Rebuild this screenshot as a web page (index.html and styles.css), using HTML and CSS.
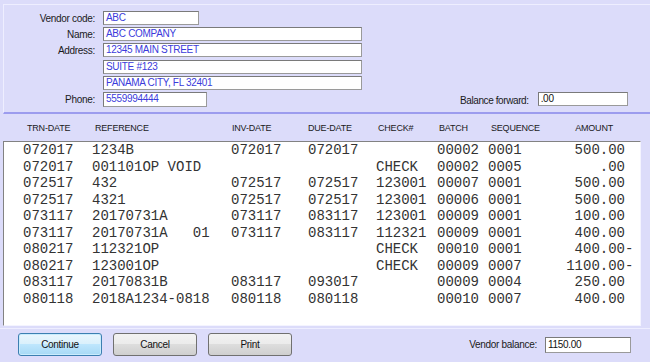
FILE: index.html
```html
<!DOCTYPE html>
<html lang="en">
<head>
  <meta charset="UTF-8">
  <title>Vendor History</title>
  <link rel="stylesheet" href="styles.css">
</head>
<body>
  <!-- Vendor info panel -->
  <div class="top-panel">
    <div class="form-row">
      <label>Vendor code:</label>
      <div class="field w-code">ABC</div>
    </div>
    <div class="form-row">
      <label>Name:</label>
      <div class="field w-long">ABC COMPANY</div>
    </div>
    <div class="form-row">
      <label>Address:</label>
      <div class="field w-long">12345 MAIN STREET</div>
    </div>
    <div class="form-row">
      <label></label>
      <div class="field w-long">SUITE #123</div>
    </div>
    <div class="form-row">
      <label></label>
      <div class="field w-long">PANAMA CITY, FL 32401</div>
    </div>
    <div class="form-row phone-row">
      <label>Phone:</label>
      <div class="field w-phone">5559994444</div>
      <span class="balance-label">Balance forward:</span>
      <div class="field w-balance">.00</div>
    </div>
  </div>

  <!-- Transactions -->
  <div class="grid header">
    <span class="h-trn">TRN-DATE</span>
    <span class="h-ref">REFERENCE</span>
    <span class="h-inv">INV-DATE</span>
    <span class="h-due">DUE-DATE</span>
    <span class="h-check">CHECK#</span>
    <span class="h-batch">BATCH</span>
    <span class="h-seq">SEQUENCE</span>
    <span class="h-amt">AMOUNT</span>
  </div>

  <div class="listbox" id="list"></div>

  <!-- Footer -->
  <div class="footer">
    <button class="btn default">Continue</button>
    <button class="btn">Cancel</button>
    <button class="btn">Print</button>
    <span class="vb-label">Vendor balance:</span>
    <div class="field w-vbal">1150.00</div>
  </div>

  <script>
    var rows = [
      ["072017", "1234B", "072017", "072017", "", "00002", "0001", "500.00", ""],
      ["072017", "001101OP VOID", "", "", "CHECK", "00002", "0005", ".00", ""],
      ["072517", "432", "072517", "072517", "123001", "00007", "0001", "500.00", ""],
      ["072517", "4321", "072517", "072517", "123001", "00006", "0001", "500.00", ""],
      ["073117", "20170731A", "073117", "083117", "123001", "00009", "0001", "100.00", ""],
      ["073117", "20170731A   01", "073117", "083117", "112321", "00009", "0001", "400.00", ""],
      ["080217", "112321OP", "", "", "CHECK", "00010", "0001", "400.00", "-"],
      ["080217", "123001OP", "", "", "CHECK", "00009", "0007", "1100.00", "-"],
      ["083117", "20170831B", "083117", "093017", "", "00009", "0004", "250.00", ""],
      ["080118", "2018A1234-0818", "080118", "080118", "", "00010", "0007", "400.00", ""]
    ];
    var list = document.getElementById("list");
    rows.forEach(function(r) {
      var row = document.createElement("div");
      row.className = "grid row";
      r.forEach(function(v, i) {
        var c = document.createElement("span");
        c.textContent = v;
        if (i === 7) c.className = "amt";
        row.appendChild(c);
      });
      list.appendChild(row);
    });
  </script>
</body>
</html>
```

FILE: styles.css
```css
body {
  margin: 0;
  width: 650px;
  height: 362px;
  overflow: hidden;
  background: #dcdcfa;
  font-family: "Liberation Sans", Arial, sans-serif;
  font-size: 10px;
  color: #1a1a1a;
}

/* Vendor info panel */
.top-panel {
  margin: 4px 0 0 3px;
  padding-top: 6px;
  border-top: 1px solid #eeeeff;
  border-left: 1px solid #eeeeff;
  border-bottom: 2px solid #9c9cee;
  display: flex;
  flex-direction: column;
  gap: 2.2px;
  box-sizing: border-box;
  height: 110px;
}
.form-row {
  display: flex;
  align-items: center;
  height: 14px;
}
.form-row label {
  width: 91px;
  text-align: right;
  margin-right: 8px;
  letter-spacing: -0.3px;
}
.phone-row {
  height: 15px;
}
.balance-label {
  margin-left: 253px;
  margin-top: 3px;
  letter-spacing: -0.4px;
}
.field {
  box-sizing: border-box;
  height: 14px;
  background: #fff;
  border: 1px solid #7a7a7a;
  border-right-color: #9a9a9a;
  border-bottom-color: #9a9a9a;
  color: #3b3bdb;
  padding-left: 2px;
  line-height: 12px;
  letter-spacing: -0.3px;
  white-space: nowrap;
}
.w-code { width: 96px; }
.w-long { width: 259px; }
.w-phone { width: 104px; height: 15px; }
.w-balance { width: 90px; margin-left: 9px; color: #111; }
.w-vbal { width: 86px; height: 16px; line-height: 14px; color: #111; margin-left: 8px; }

/* Transaction grid */
.grid {
  display: grid;
  grid-template-columns: 69px 139px 77px 68px 61px 51px 60px 77px 10px;
  padding-left: 23px;
}
.header {
  height: 27px;
  align-items: center;
  font-size: 9px;
  letter-spacing: -0.2px;
}
.h-trn { margin-left: 4px; }
.h-ref { margin-left: 3px; }
.h-inv { margin-left: 1px; }
.h-check { margin-left: 2px; }
.h-batch { margin-left: 2px; }
.h-seq { margin-left: 3px; }
.h-amt { text-align: right; margin-right: 12px; }

.listbox {
  margin-left: 3px;
  width: 638px;
  height: 185px;
  box-sizing: border-box;
  background: #fff;
  border-top: 1px solid #828282;
  border-left: 1px solid #828282;
  border-bottom: 1px solid #f4f4ff;
  border-right: 1px solid #f4f4ff;
}
.listbox .grid {
  padding-left: 19px;
}
.row {
  font-family: "Liberation Mono", "Courier New", monospace;
  font-size: 14px;
  line-height: 16.5px;
  height: 16.5px;
  color: #333;
  white-space: pre;
}
.row .amt {
  text-align: right;
}

/* Footer */
.footer {
  margin-top: 2px;
  border-top: 1px solid #eeeeff;
  display: flex;
  align-items: center;
  padding: 4px 0 0 18px;
}
.btn {
  width: 84px;
  height: 23px;
  margin-right: 11px;
  border: 1px solid #707070;
  border-radius: 3px;
  background: linear-gradient(#f2f2f2 0%, #ebebeb 50%, #dddddd 50%, #cfcfcf 100%);
  font-family: "Liberation Sans", Arial, sans-serif;
  font-size: 10px;
  color: #111;
  padding: 0;
  letter-spacing: -0.3px;
}
.btn.default {
  border-color: #3c7fb1;
  background: linear-gradient(#eaf6fd 0%, #d9f0fc 50%, #bee6fd 50%, #a7d9f5 100%);
  box-shadow: inset 0 0 0 1px #c9ecfd;
}
.vb-label {
  margin-left: auto;
  letter-spacing: -0.3px;
}
.w-vbal {
  margin-right: 19px;
}
```
